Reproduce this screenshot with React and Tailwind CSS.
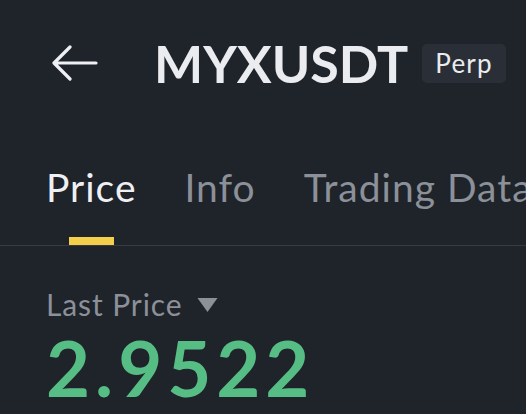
export default function App() {
  const tabs = ["Price", "Info", "Trading Data"];
  return (
    <div
      className="w-[526px] h-[414px] overflow-hidden bg-[#1f232a] text-[#eaecef]"
      style={{ fontFamily: "Lato, 'Open Sans', sans-serif" }}
    >
      {/* header */}
      <div className="h-[126px] flex items-center pl-[52px]">
        <svg width="46" height="36" viewBox="0 0 46 36" fill="none" stroke="#eef0f3" strokeWidth="3.2" strokeLinecap="round" strokeLinejoin="round">
          <path d="M44 18H3M18 2L2 18l16 16" />
        </svg>
        <div className="ml-[56px] text-[52px] font-bold leading-none">MYXUSDT</div>
        <div className="ml-[14px] h-[39px] px-[13px] flex items-center rounded-[5px] bg-[#2a2f37] text-[26px] leading-none tracking-[1.2px]">
          Perp
        </div>
      </div>

      {/* tabs */}
      <div className="h-[120px] flex items-end gap-[48px] pl-[46px] border-b border-[#363b43] whitespace-nowrap">
        {tabs.map((t, i) => (
          <div key={t} className="flex flex-col items-center">
            <div className={`text-[39px] leading-none tracking-[1px] ${i === 0 ? "text-[#eef0f3]" : "text-[#8b9099]"}`}>{t}</div>
            <div className={`mt-[30px] h-[8px] w-[45px] ${i === 0 ? "bg-[#f3cf4c]" : "bg-transparent"}`} />
          </div>
        ))}
      </div>

      {/* last price */}
      <div className="pl-[46px] pt-[43px]">
        <div className="flex items-center gap-[14px] text-[30px] leading-none tracking-[0.9px] text-[#8b9099]">
          <span>Last Price</span>
          <svg width="21" height="15" viewBox="0 0 21 15">
            <path d="M0.5 1h20l-10 14z" fill="#8b9099" />
          </svg>
        </div>
        <div className="mt-[11px] text-[76px] font-bold leading-none tracking-[5px] text-[#56bd84]">2.9522</div>
      </div>
    </div>
  );
}
